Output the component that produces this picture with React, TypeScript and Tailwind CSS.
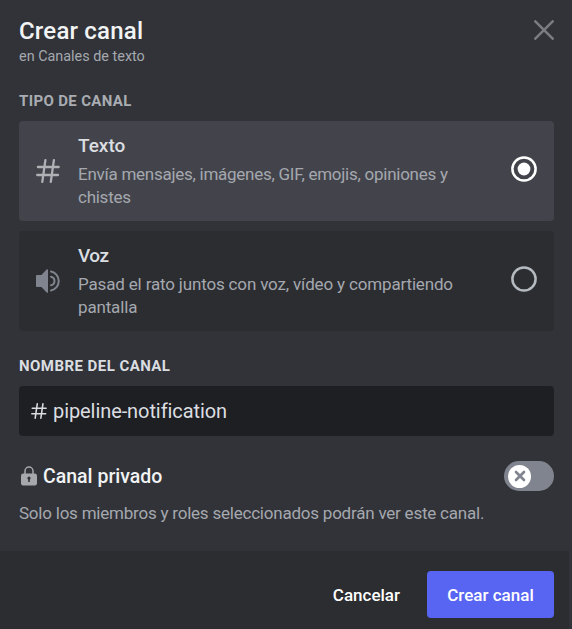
import type { ReactNode } from "react";

function HashIcon({ className }: { className: string }) {
  return (
    <svg viewBox="0 0 24 24" className={className} fill="none" stroke="currentColor" strokeWidth="2.3" strokeLinecap="round">
      <path d="M9.4 1.2 6.3 22.8M17.9 1.2 14.8 22.8M1.9 8h20.8M1.2 16h20.8" />
    </svg>
  );
}

function SpeakerIcon() {
  return (
    <svg viewBox="0 0 24 24" className="size-6" fill="none">
      <path d="M10.600.5c.7-.6 1.400-.3 1.400.6v21.800c0 .9-.7 1.200-1.400.6L5.400 18H1.300C.5 18 0 17.500 0 16.700V7.300C0 6.500.5 6 1.300 6h4.100Z" fill="currentColor" />
      <path d="M15 7.700a4.400 4.400 0 0 1 0 8.600M15 2.500a9.700 9.700 0 0 1 0 19" stroke="currentColor" strokeWidth="2" strokeLinecap="round" />
    </svg>
  );
}

function Radio({ checked }: { checked: boolean }) {
  return (
    <svg viewBox="0 0 26 26" className={checked ? "size-[26px] text-white" : "size-[26px] text-[#b5bac1]"} fill="none">
      <circle cx="13" cy="13" r="11.600" stroke="currentColor" strokeWidth="2.500" />
      {checked && <circle cx="13" cy="13" r="6.400" fill="currentColor" />}
    </svg>
  );
}

function ChannelOption({ icon, title, checked, children }: { icon: ReactNode; title: ReactNode; checked: boolean; children: ReactNode }) {
  return (
    <div className={`flex h-[100px] items-center rounded-[4px] pr-[17px] pl-[17px] ${checked ? "bg-[#43444b]" : "bg-[#2b2d31]"}`}>
      <div className="w-[42px] shrink-0">{icon}</div>
      <div className="grow">
        <div className="mb-[5px] text-[19px] leading-6 font-medium text-[#dbdee1]">{title}</div>
        <div className="text-[17px] leading-[23px] text-[#a5a8af]">{children}</div>
      </div>
      <div className="mb-1">
        <Radio checked={checked} />
      </div>
    </div>
  );
}

export default function App() {
  return (
    <div className="flex h-[629px] w-[572px] flex-col bg-[#313338] font-['Roboto',sans-serif] whitespace-nowrap">
      <main className="flex h-[551px] flex-col pr-[18px] pl-[19px]">
        <header className="flex justify-between pt-4">
          <div>
            <h1 className="text-[24px] leading-[30px] font-medium tracking-[0.2px] text-[#f2f3f5]">Crear canal</h1>
            <p className="text-[14.4px] leading-[21px] text-[#a5a8af]">en Canales de texto</p>
          </div>
          <svg viewBox="0 0 20 20" className="mt-1 size-5 text-[#7a7d83]" fill="none" stroke="currentColor" strokeWidth="2.5" strokeLinecap="round">
            <path d="m1.300 1.300 17.400 17.400M18.700 1.300 1.300 18.700" />
          </svg>
        </header>
        <h2 className="mt-6 text-[15px] leading-5 font-bold tracking-[0.35px] text-[#a9acb2]">TIPO DE CANAL</h2>
        <div className="mt-[10px] flex flex-col gap-[10px]">
          <ChannelOption icon={<HashIcon className="size-6 text-[#b0b1b5]" />} title="Texto" checked>
            <span className="tracking-[-0.26px]">
              Envía mensajes, imágenes, GIF, emojis, opiniones y<br />chistes
            </span>
          </ChannelOption>
          <ChannelOption
            icon={<span className="text-[#80848e]"><SpeakerIcon /></span>}
            title={<span className="tracking-[-0.5px]">Voz</span>}
            checked={false}
          >
            <span className="tracking-[-0.16px]">
              Pasad el rato juntos con voz, vídeo y compartiendo<br />pantalla
            </span>
          </ChannelOption>
        </div>
        <h2 className="mt-[25px] text-[15px] leading-5 font-bold tracking-[0.45px] text-[#dbdee1]">NOMBRE DEL CANAL</h2>
        <div className="mt-[10px] flex h-[50px] shrink-0 items-center rounded-[4px] bg-[#1e1f22] pl-[12px] text-[#dbdee1]">
          <HashIcon className="size-4" />
          <span className="ml-[6px] text-[20px] leading-6 tracking-[-0.08px]">pipeline-notification</span>
        </div>
        <div className="mt-[25px] flex h-[30px] items-center">
          <svg viewBox="0 0 16 20" className="mr-[6px] ml-[2px] h-5 w-4 text-[#a7a8ab]" fill="none">
            <path d="M4 9V5a4 4 0 0 1 8 0v4" stroke="currentColor" strokeWidth="1.500" />
            <rect y="7.500" width="16" height="12" rx="2.200" fill="currentColor" />
            <path d="M8 10.500a1.800 1.800 0 0 0-.8 3.300V16h1.600v-2.200A1.800 1.800 0 0 0 8 10.500Z" fill="#313338" />
          </svg>
          <span className="pt-px text-[19.5px] font-medium text-[#f2f3f5]">Canal privado</span>
          <div className="ml-auto flex h-[30px] w-[50px] items-center rounded-full bg-[#80848e] pl-1">
            <div className="flex size-[23px] items-center justify-center rounded-full bg-white">
              <svg viewBox="0 0 12 12" className="size-3" fill="none" stroke="#80848e" strokeWidth="2.6" strokeLinecap="round">
                <path d="m2 2 8 8M10 2 2 10" />
              </svg>
            </div>
          </div>
        </div>
        <p className="mt-[10px] text-[17px] leading-[25px] tracking-[-0.22px] text-[#a5a8af]">Solo los miembros y roles seleccionados podrán ver este canal.</p>
      </main>
      <footer className="mr-[3px] flex h-[78px] items-start justify-end bg-[#2b2d31] pt-5 pr-[15px] text-[17px] font-medium text-white">
        <button className="h-[47px] pt-[2px] pr-[27px]">Cancelar</button>
        <button className="h-[47px] w-[127px] rounded-[4px] bg-[#5865f2] pt-[2px]">Crear canal</button>
      </footer>
    </div>
  );
}
